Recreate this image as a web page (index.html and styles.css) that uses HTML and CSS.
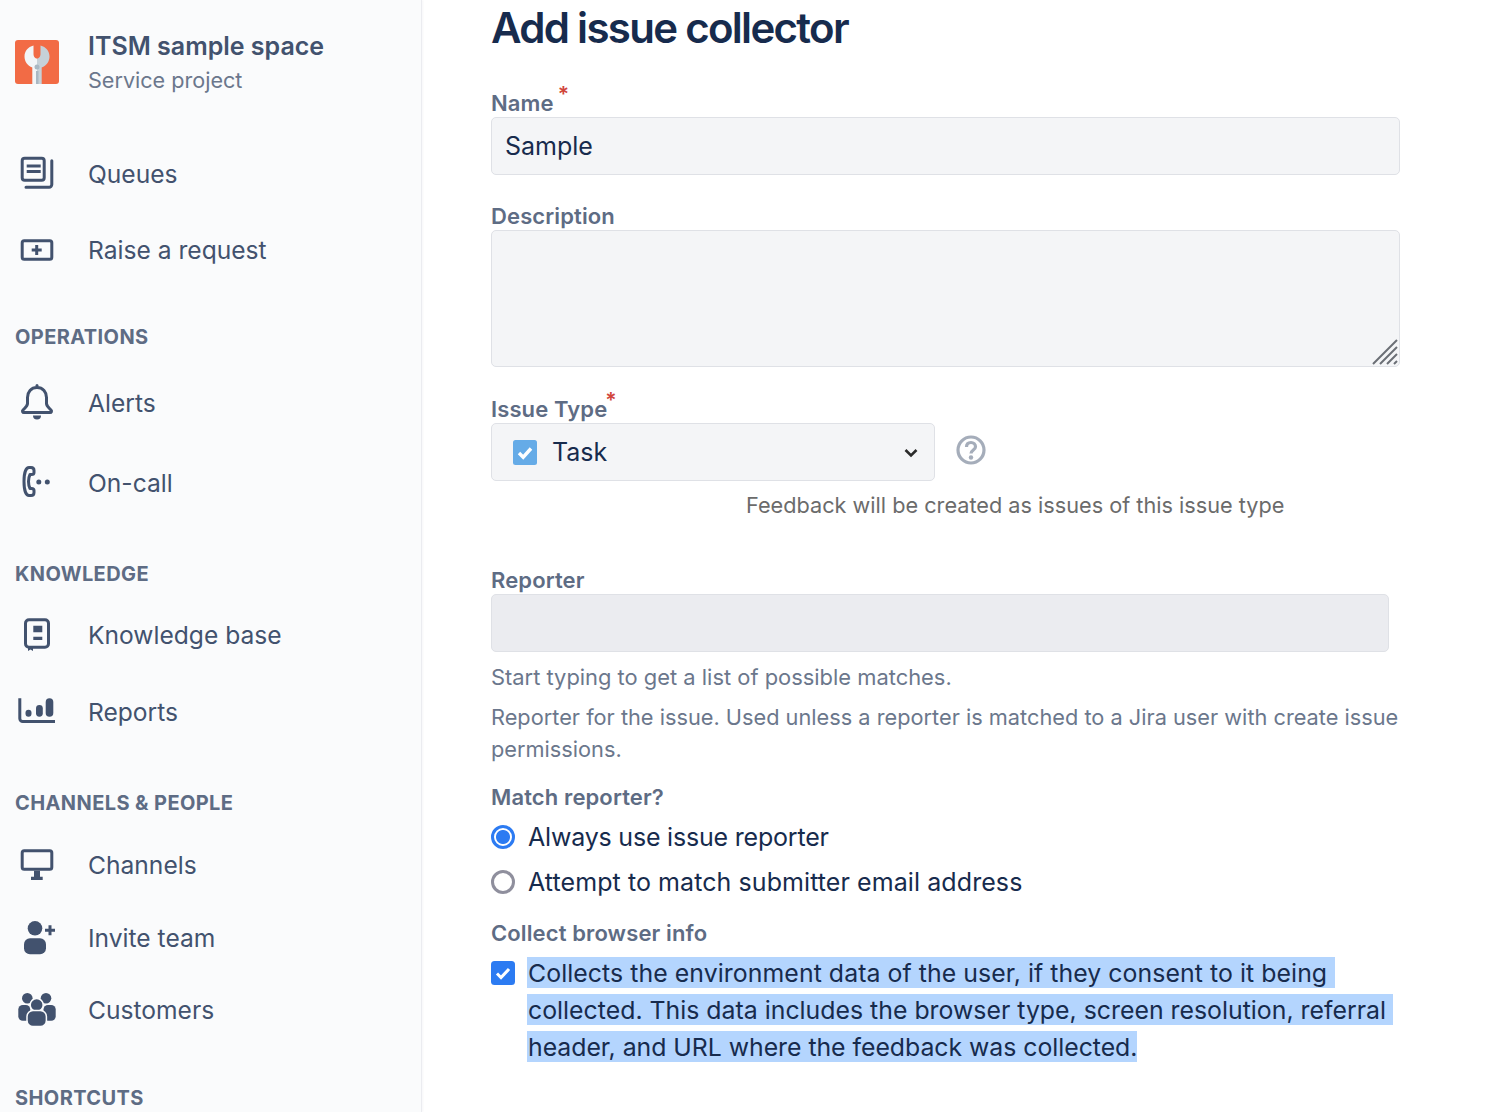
FILE: index.html
```html
<!DOCTYPE html>
<html lang="en">
<head>
    <meta charset="UTF-8">
    <title>Add issue collector</title>
    <link rel="stylesheet" href="styles.css">
</head>
<body>
    <!-- Sidebar -->
    <nav class="sidebar">
        <div class="project">
            <svg class="nav-icon project-logo" viewBox="0 0 44 44">
                <rect width="44" height="44" rx="3" fill="#F26B45"/>
                <path d="M25.500 5.500C31 7 34.500 11 34.500 16.500c0 5-3 9-7.800 11V44H22V18.500c2.500 0 3.500-2.500 3.500-4.500z" fill="#C6D1D8"/>
                <path d="M18.500 5.500C13 7 9.500 11 9.500 16.500c0 5 3 9 7.800 11V44H22V18.500c-2.500 0-3.500-2.500-3.500-4.500z" fill="#F2F5F7"/>
                <circle cx="22" cy="27" r="2.500" fill="#A9B8C3"/>
                <rect x="21" y="31" width="2.500" height="13" fill="#A9B8C3"/>
            </svg>
            <div>
                <div class="project-name">ITSM sample space</div>
                <div class="project-type">Service project</div>
            </div>
        </div>

        <div class="group group-main">
            <div class="nav-item">
                <svg class="nav-icon" viewBox="0 0 44 44" fill="none" stroke="#42526E" stroke-width="3">
                    <rect x="7.200" y="6.200" width="22" height="22" rx="2.500"/>
                    <path d="M11.700 14h14M11.700 19.500h14" />
                    <path d="M36.800 8.700V32.500a2.700 2.700 0 0 1-2.700 2.700H11" stroke-linecap="round"/>
                </svg>
                Queues
            </div>
            <div class="nav-item">
                <svg class="nav-icon" viewBox="0 0 44 44" fill="none" stroke="#42526E" stroke-width="3">
                    <rect x="7.200" y="12.800" width="29.600" height="18.400" rx="2"/>
                    <path d="M16.700 22h10M21.700 17v10"/>
                </svg>
                Raise a request
            </div>
        </div>

        <div class="section-title title-operations">OPERATIONS</div>
        <div class="group group-operations">
            <div class="nav-item">
                <svg class="nav-icon" viewBox="0 0 44 44" fill="none" stroke="#42526E" stroke-width="3">
                    <path d="M22 6.500c-6 0-9.500 4.500-9.500 10v6c0 2.500-1.500 3.500-4.500 6.500-1 1-.5 2.500 1 2.500h26c1.500 0 2-1.500 1-2.500-3-3-4.500-4-4.500-6.500v-6c0-5.500-3.500-10-9.500-10z" stroke-linejoin="round"/>
                    <circle cx="22" cy="4.500" r="1.500" fill="#42526E" stroke="none"/>
                    <path d="M18 34.500h8a4 4 0 0 1-8 0z" fill="#42526E" stroke="none"/>
                </svg>
                Alerts
            </div>
            <div class="nav-item">
                <svg class="nav-icon" viewBox="0 0 44 44" fill="none" stroke="#42526E" stroke-width="3">
                    <path d="M16 6.500h-2c-3 0-5 5-5 14s2 14 5 14h2c2 0 3-1.500 3-3v-2c0-1.500-1-2-2.500-2H15c-1-2-1.500-4-1.500-7s.5-5 1.500-7h1.500c1.500 0 2.500-.5 2.500-2v-2c0-1.500-1-3-3-3z" stroke-linejoin="round" stroke-width="3"/>
                    <circle cx="23.800" cy="21" r="2.500" fill="#42526E" stroke="none"/>
                    <circle cx="32.300" cy="21" r="2.500" fill="#42526E" stroke="none"/>
                </svg>
                On-call
            </div>
        </div>

        <div class="section-title title-knowledge">KNOWLEDGE</div>
        <div class="group group-knowledge">
            <div class="nav-item">
                <svg class="nav-icon" viewBox="0 0 44 44" fill="none" stroke="#42526E" stroke-width="3">
                    <rect x="10.500" y="6.800" width="23" height="27.500" rx="3.500"/>
                    <path d="M18.300 12.700h9v6.600h-9zM18.300 23.700h9V27h-9z" fill="#42526E" stroke="none"/>
                    <path d="M13 34h5v4l-2.500-1.500L13 38z" fill="#42526E" stroke="none"/>
                </svg>
                Knowledge base
            </div>
            <div class="nav-item">
                <svg class="nav-icon" viewBox="0 0 44 44" fill="none" stroke="#42526E" stroke-width="3">
                    <path d="M4.800 8.300V28.500a3 3 0 0 0 3 3H40"/>
                    <rect x="10.500" y="19.700" width="6" height="7" rx="3" fill="#42526E" stroke="none"/>
                    <rect x="21" y="15" width="6.800" height="11.700" rx="3.400" fill="#42526E" stroke="none"/>
                    <rect x="30.700" y="8.300" width="7.600" height="18.400" rx="3.800" fill="#42526E" stroke="none"/>
                </svg>
                Reports
            </div>
        </div>

        <div class="section-title title-channels">CHANNELS &amp; PEOPLE</div>
        <div class="group group-channels">
            <div class="nav-item">
                <svg class="nav-icon" viewBox="0 0 44 44" fill="none" stroke="#42526E" stroke-width="3">
                    <rect x="7.200" y="7.800" width="29.600" height="18.400" rx="2"/>
                    <path d="M19 27.700h6v6h2.700V37H16v-3.300h3z" fill="#42526E" stroke="none"/>
                </svg>
                Channels
            </div>
            <div class="nav-item">
                <svg class="nav-icon" viewBox="0 0 44 44" fill="#42526E">
                    <circle cx="20" cy="12.300" r="7.300"/>
                    <rect x="9" y="22.300" width="22" height="16" rx="6"/>
                    <path d="M35 9.300v10M30 14.300h10" stroke="#42526E" stroke-width="3" fill="none"/>
                </svg>
                Invite team
            </div>
            <div class="nav-item">
                <svg class="nav-icon" viewBox="0 0 44 44" fill="#42526E">
                    <circle cx="12.300" cy="10.300" r="5.300"/>
                    <circle cx="31" cy="10.300" r="5.300"/>
                    <rect x="3.300" y="17" width="12" height="15.700" rx="4.500"/>
                    <rect x="28.500" y="17" width="12.200" height="15.700" rx="4.500"/>
                    <circle cx="21.700" cy="17" r="6.500" stroke="#FAFBFC" stroke-width="1.500"/>
                    <rect x="12" y="22.500" width="19.400" height="16" rx="6" stroke="#FAFBFC" stroke-width="1.500"/>
                </svg>
                Customers
            </div>
        </div>

        <div class="section-title title-shortcuts">SHORTCUTS</div>
    </nav>

    <!-- Form -->
    <main class="content">
        <h1>Add issue collector</h1>

        <label class="field-label label-name">Name<span class="req">*</span></label>
        <input class="text-input" type="text" value="Sample">

        <label class="field-label label-desc">Description</label>
        <div class="textarea-wrap">
            <textarea class="text-area"></textarea>
            <svg class="resizer" viewBox="0 0 26 26" fill="none" stroke="#6b6f76" stroke-width="2">
                <path d="M1 25L25 1M8 25L25 8M15 25L25 15M22 25l3-3"/>
            </svg>
        </div>

        <label class="field-label label-type">Issue Type<span class="req req-close">*</span></label>
        <div class="select-row">
            <div class="select-box">
                <svg class="task-icon" viewBox="0 0 24 25">
                    <rect width="24" height="25" rx="2.500" fill="#65ABE7"/>
                    <path d="M6 13l4.200 4.200 7.800-8.700" fill="none" stroke="#fff" stroke-width="3.400"/>
                </svg>
                <span class="select-value">Task</span>
                <svg class="chevron" viewBox="0 0 14 10" fill="none" stroke="#2b2b2b" stroke-width="2.600">
                    <path d="M1.500 2l5.500 5.500L12.500 2"/>
                </svg>
            </div>
            <svg class="help-icon" viewBox="0 0 30 30" fill="none" stroke="#A5ADBA" stroke-width="3.200">
                <circle cx="15" cy="15" r="13"/>
                <path d="M10.500 12c0-3 2-4.500 4.500-4.500s4.500 1.700 4.500 4.200c0 3.300-4.500 3.300-4.500 6.800"/>
                <circle cx="15" cy="22.500" r="2.200" fill="#A5ADBA" stroke="none"/>
            </svg>
        </div>
        <div class="type-note">Feedback will be created as issues of this issue type</div>

        <label class="field-label label-reporter">Reporter</label>
        <div class="reporter-input"></div>
        <p class="hint hint-first">Start typing to get a list of possible matches.</p>
        <p class="hint hint-second">Reporter for the issue. Used unless a reporter is matched to a Jira user with create issue permissions.</p>

        <label class="field-label label-match">Match reporter?</label>
        <div class="radio-row radio-first"><span class="radio radio-on"></span><span class="radio-always">Always use issue reporter</span></div>
        <div class="radio-row"><span class="radio"></span><span class="radio-attempt">Attempt to match submitter email address</span></div>

        <label class="field-label label-browser">Collect browser info</label>
        <div class="check-row">
            <svg class="check-box" viewBox="0 0 24 24">
                <rect width="24" height="24" rx="3.500" fill="#2C7BF2"/>
                <path d="M6 12.500l4 4 8-8.500" fill="none" stroke="#fff" stroke-width="3"/>
            </svg>
            <div class="selected-text">
                <span class="sel-line sel-first">Collects the environment data of the user, if they consent to it being</span>
                <span class="sel-line sel-second">collected. This data includes the browser type, screen resolution, referral</span>
                <span class="sel-line sel-third">header, and URL where the feedback was collected.</span>
            </div>
        </div>
    </main>
</body>
</html>
```

FILE: styles.css
```css
html, body {
    margin: 0;
    height: 1112px;
    overflow: hidden;
}

body {
    display: flex;
    background: #fff;
    font-family: Inter, "Liberation Sans", sans-serif;
    font-size: 25px;
    color: #172B4D;
}

/* Sidebar */
.sidebar {
    width: 422px;
    height: 1112px;
    flex-shrink: 0;
    box-sizing: border-box;
    padding: 0 15px;
    background: #FAFBFC;
    border-right: 1px solid #EBECF0;
    box-shadow: 1px 0 2px rgba(9, 30, 66, 0.04);
    overflow: hidden;
    color: #42526E;
}

.project {
    display: flex;
    align-items: center;
    gap: 29px;
    padding-top: 27px;
}

.project-logo { margin-top: 2px; }

.project-name {
    font-size: 25px;
    font-weight: 600;
    line-height: 38px;
}

.project-type {
    font-size: 21.600px;
    line-height: 30px;
    color: #6B778C;
}

.nav-icon {
    width: 44px;
    height: 44px;
    flex-shrink: 0;
}

.nav-item {
    display: flex;
    align-items: center;
    gap: 29px;
    height: 44px;
    font-size: 24.600px;
}

.group {
    display: flex;
    flex-direction: column;
}

.group-main { gap: 32px; margin-top: 57px; }
.group-operations { gap: 36px; margin-top: 32px; }
.group-knowledge { gap: 33px; margin-top: 27px; }
.group-channels { gap: 28.500px; margin-top: 28px; }

.section-title {
    height: 24px;
    line-height: 24px;
    font-size: 20px;
    font-weight: 700;
    letter-spacing: 0.4px;
    color: #5E6C84;
}

.title-operations { margin-top: 53px; }
.title-knowledge { margin-top: 57px; }
.title-channels { margin-top: 57px; }
.title-shortcuts { margin-top: 54px; }

/* Form */
.content {
    flex: 1;
    padding-left: 69px;
}

h1 {
    margin: 0;
    padding-top: 3px;
    font-size: 42px;
    line-height: 50px;
    font-weight: 600;
    letter-spacing: -1.700px;
    color: #172B4D;
}

.field-label {
    display: block;
    height: 26px;
    line-height: 26px;
    font-size: 22px;
    font-weight: 600;
    letter-spacing: 0.120px;
    color: #5E6C84;
}

.label-name { margin-top: 37px; }
.label-desc { margin-top: 28px; }
.label-type { margin-top: 29px; margin-bottom: 1px; }
.label-reporter { margin-top: 48px; }
.label-match { margin-top: 19px; }
.label-browser { margin-top: 16px; }

.req {
    position: relative;
    top: -9px;
    margin-left: 4px;
    font-size: 21px;
    color: #D1453B;
}

.req-close { margin-left: -2px; }

.text-input, .text-area {
    display: block;
    width: 909px;
    box-sizing: border-box;
    margin: 0;
    padding: 0 13px;
    background: #F4F5F7;
    border: 1px solid #DFE1E6;
    border-radius: 5px;
    font-family: inherit;
    font-size: 25px;
    color: #172B4D;
    outline: none;
}

.text-input { height: 58px; }

.label-name + .text-input { margin-top: 1px; }

.textarea-wrap {
    position: relative;
    width: 909px;
    height: 137px;
    margin-top: 1px;
}

.text-area {
    height: 137px;
    resize: none;
}

.resizer {
    position: absolute;
    right: 2px;
    bottom: 2px;
    width: 26px;
    height: 26px;
}

.select-row {
    display: flex;
    align-items: center;
    gap: 21px;
}

.select-box {
    display: flex;
    align-items: center;
    width: 444px;
    height: 58px;
    box-sizing: border-box;
    padding: 0 16px 0 21px;
    background: #F4F5F7;
    border: 1px solid #DFE1E6;
    border-radius: 5px;
}

.task-icon {
    width: 24px;
    height: 25px;
    margin-right: 15px;
}

.select-value { flex: 1; }

.chevron {
    width: 14px;
    height: 10px;
    margin-top: 1px;
}

.help-icon {
    width: 30px;
    height: 30px;
    margin-bottom: 4px;
}

.type-note {
    margin: 10px 0 0 255px;
    line-height: 28px;
    font-size: 21.700px;
    color: #6B6B6B;
}

.reporter-input {
    width: 898px;
    height: 58px;
    box-sizing: border-box;
    margin-top: 1px;
    background: #EBECF0;
    border: 1px solid #DFE1E6;
    border-radius: 5px;
}

.hint {
    width: 930px;
    margin: 0;
    line-height: 32px;
    color: #6B778C;
}

.hint-first { margin-top: 9px; font-size: 21.900px; }
.hint-second { margin-top: 8px; font-size: 21.750px; }

.radio-row {
    display: flex;
    align-items: center;
    gap: 13px;
    height: 45px;
}

.radio-first { margin-top: 4px; }

.radio-always { letter-spacing: -0.200px; }
.radio-attempt { letter-spacing: 0.080px; }

.radio {
    width: 24px;
    height: 24px;
    box-sizing: border-box;
    border: 3px solid #8F8F9D;
    border-radius: 50%;
    background: #fff;
}

.radio-on {
    border-color: #2C7BF2;
    background: radial-gradient(circle, #2C7BF2 0 6.500px, #fff 7.500px);
}

.check-row {
    display: flex;
    align-items: flex-start;
    gap: 13px;
    margin-top: 9px;
}

.check-box {
    width: 24px;
    height: 24px;
    margin-top: 6px;
    flex-shrink: 0;
}

.selected-text {
    display: flex;
    flex-direction: column;
    gap: 6px;
    margin: 2px 0 0 -1px;
}

.sel-line {
    display: block;
    width: fit-content;
    height: 31px;
    line-height: 32px;
    font-size: 24.850px;
    padding-left: 1px;
    background: #B4D5FE;
    white-space: nowrap;
}

.sel-first { padding-right: 8px; letter-spacing: 0.060px; }
.sel-second { padding-right: 7px; }
.sel-third { letter-spacing: -0.040px; }
```
